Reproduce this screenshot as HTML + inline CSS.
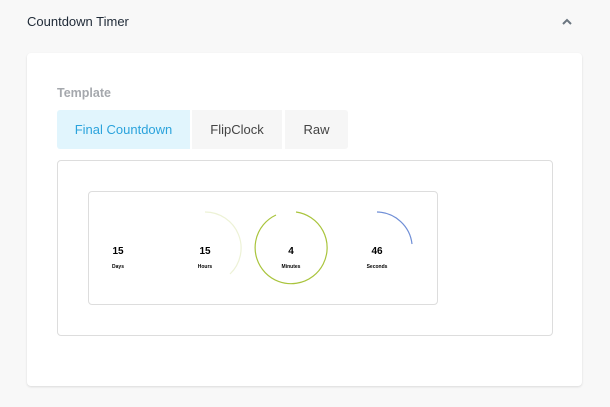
<!DOCTYPE html>
<html><head><style>
body{margin:0;width:610px;height:407px;background:#f8f8f8;font-family:"Liberation Sans",sans-serif;position:relative;overflow:hidden}
.t{position:absolute;left:27px;top:14px;font-size:13px;color:#1f2a37}
.card{position:absolute;left:27px;top:53px;width:555px;height:333px;background:#fff;border-radius:4px;box-shadow:0 1px 2px rgba(0,0,0,.12)}
.lbl{position:absolute;left:57px;top:86px;font-size:12.5px;color:#a5a8ad;font-weight:bold}
.tab{position:absolute;top:110px;height:39px;line-height:39px;text-align:center;font-size:13px;background:#f6f6f6;color:#444}
.prev{position:absolute;left:57px;top:160px;width:494px;height:174px;border:1px solid #ddd;border-radius:4px}
.in{position:absolute;left:88px;top:191px;width:348px;height:112px;border:1px solid #ddd;border-radius:4px}
.n{position:absolute;top:246px;width:60px;margin-left:-30px;text-align:center;font-size:10px;font-weight:bold;color:#000}
.s{position:absolute;top:264px;width:60px;margin-left:-30px;text-align:center;font-size:5px;font-weight:bold;color:#000}
</style></head><body>
<div class="t">Countdown Timer</div>
<svg style="position:absolute;left:561px;top:17px" width="12" height="10"><path d="M2 7 L6 3 L10 7" fill="none" stroke="#6b7680" stroke-width="2"/></svg>
<div class="card"></div>
<div class="lbl">Template</div>
<div class="tab" style="left:57px;width:133px;background:#e1f5fd;color:#2ba3dc;border-radius:3px 0 0 3px">Final Countdown</div>
<div class="tab" style="left:192px;width:90px">FlipClock</div>
<div class="tab" style="left:285px;width:63px;border-radius:0 3px 3px 0">Raw</div>
<div class="prev"></div>
<div class="in"></div>
<svg style="position:absolute;left:0;top:0" width="610" height="407">
<path d="M205 212 A36 36 0 0 1 230 274" fill="none" stroke="#edf2d6" stroke-width="1.2"/>
<path d="M296 212 A36 36 0 1 1 276 215" fill="none" stroke="#a9c43c" stroke-width="1.2"/>
<path d="M377 212 A36 36 0 0 1 412 244" fill="none" stroke="#6f8ed6" stroke-width="1.2"/>
</svg>
<div class="n" style="left:118px">15</div><div class="s" style="left:118px">Days</div>
<div class="n" style="left:205px">15</div><div class="s" style="left:205px">Hours</div>
<div class="n" style="left:291px">4</div><div class="s" style="left:291px">Minutes</div>
<div class="n" style="left:377px">46</div><div class="s" style="left:377px">Seconds</div>
</body></html>
